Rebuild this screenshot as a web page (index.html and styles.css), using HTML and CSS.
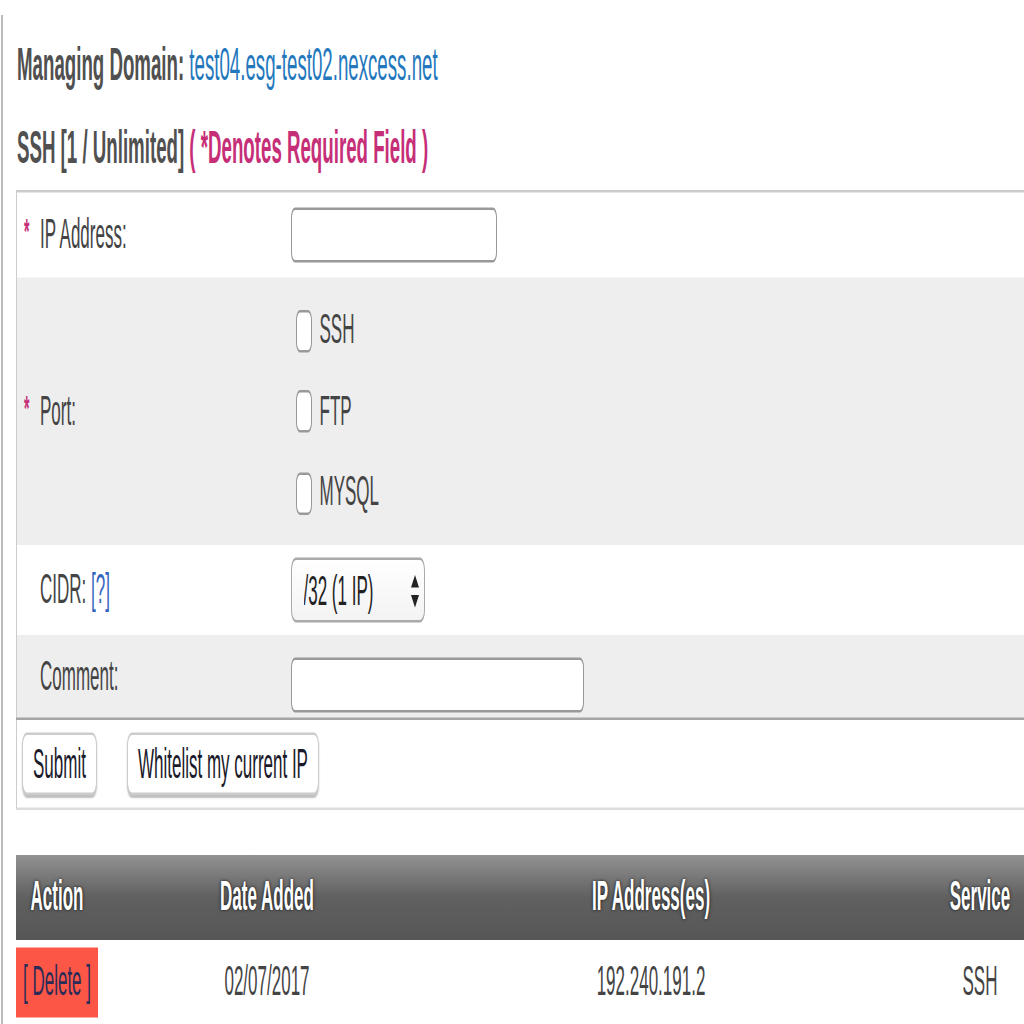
FILE: index.html
```html
<!DOCTYPE html>
<html lang="en">
<head>
    <meta charset="UTF-8">
    <title>IP Whitelist - SSH</title>
    <link rel="stylesheet" href="styles.css">
</head>
<body>
    <div class="frame">
        <div class="page">
            <div class="content">
                <h3 class="domain">Managing Domain: <a href="#">test04.esg-test02.nexcess.net</a></h3>
                <h3 class="service-title">SSH [1 / Unlimited] <span class="required-note">( *Denotes Required Field )</span></h3>

                <form class="whitelist-form">
                    <table class="form-table">
                        <colgroup>
                            <col class="col-label">
                            <col>
                        </colgroup>
                        <tr class="row-ip">
                            <td class="label"><span class="req">*</span>IP Address:</td>
                            <td><input type="text" class="text-input ip-input"></td>
                        </tr>
                        <tr class="row-port">
                            <td class="label"><span class="req">*</span>Port:</td>
                            <td class="ports">
                                <label><input type="checkbox" class="check"> SSH</label>
                                <label><input type="checkbox" class="check"> FTP</label>
                                <label><input type="checkbox" class="check"> MYSQL</label>
                            </td>
                        </tr>
                        <tr class="row-cidr">
                            <td class="label no-req">CIDR: <a href="#" class="help">[?]</a></td>
                            <td>
                                <span class="select-wrap">
                                    <select class="cidr-select">
                                        <option>/32 (1 IP)</option>
                                        <option>/31 (2 IPs)</option>
                                        <option>/30 (4 IPs)</option>
                                        <option>/29 (8 IPs)</option>
                                    </select>
                                    <svg class="select-arrows" width="8" height="13" viewBox="0 0 8 13">
                                        <path d="M4 0 L8 5 L0 5 Z" fill="#222"/>
                                        <path d="M4 13 L8 8 L0 8 Z" fill="#222"/>
                                    </svg>
                                </span>
                            </td>
                        </tr>
                        <tr class="row-comment">
                            <td class="label no-req">Comment:</td>
                            <td><input type="text" class="text-input comment-input"></td>
                        </tr>
                    </table>
                    <div class="form-actions">
                        <button type="button" class="btn">Submit</button>
                        <button type="button" class="btn">Whitelist my current IP</button>
                    </div>
                </form>

                <table class="list-table">
                    <colgroup>
                        <col class="col-action">
                        <col class="col-date">
                        <col class="col-ip">
                        <col class="col-service">
                    </colgroup>
                    <thead>
                        <tr>
                            <th>Action</th>
                            <th>Date Added</th>
                            <th>IP Address(es)</th>
                            <th>Service</th>
                        </tr>
                    </thead>
                    <tbody>
                        <tr>
                            <td class="action"><a href="#" class="delete">[ Delete ]</a></td>
                            <td>02/07/2017</td>
                            <td>192.240.191.2</td>
                            <td>SSH</td>
                        </tr>
                    </tbody>
                </table>
            </div>
        </div>
    </div>
</body>
</html>
```

FILE: styles.css
```css
body {
    margin: 0;
    overflow: hidden;
    background: #fff;
    font-family: "Liberation Sans", Arial, sans-serif;
}
.frame {
    width: 1024px;
    height: 1024px;
    overflow: hidden;
}

/* the panel is drawn tall: everything is stretched on the vertical axis */
.page {
    width: 1024px;
    padding-top: 6px;
    transform: scaleY(2.5);
    transform-origin: 0 0;
}
.content {
    margin-left: 1px;
    border-left: 2px solid #bbb;
    padding: 9px 0 0 13px;
    height: 420px;
    overflow: hidden;
}

h3 {
    margin: 0;
    padding-left: 1px;
    font-size: 18.7px;
    line-height: 22px;
    font-weight: bold;
    color: #505050;
}
h3 a {
    color: #2378bd;
    font-weight: normal;
    text-decoration: none;
}
.domain {
    margin-bottom: 11px;
}
.service-title {
    margin-bottom: 6px;
}
.required-note {
    color: #c62f78;
}

/* form */
.form-table {
    width: 1100px;
    table-layout: fixed;
    border-collapse: collapse;
    border-top: 1px solid #ccc;
    border-left: 1px solid #ccc;
    border-bottom: 1px solid #a5a5a5;
    font-size: 17px;
    color: #444;
}
.col-label { width: 274px; }
.form-table td {
    padding: 0;
    vertical-align: middle;
}
.form-table td.label {
    padding-left: 7px;
}
.form-table td.no-req {
    padding-left: 23px;
}
.req {
    display: inline-block;
    width: 16px;
    color: #c62f78;
    font-weight: bold;
    font-size: 14px;
    vertical-align: top;
}
.row-ip td { height: 34px; }
.row-port td { height: 107px; background: #eee; }
.row-cidr td { height: 36px; }
.row-comment td { height: 33px; background: #eee; }

.help {
    color: #3565c0;
    text-decoration: none;
}

.text-input {
    box-sizing: border-box;
    height: 22px;
    border: 1px solid #999;
    border-radius: 4px;
    background: #fff;
    padding: 0 4px;
    vertical-align: middle;
}
.ip-input { width: 206px; }
.comment-input {
    width: 293px;
    margin-top: 7px;
}

.ports {
    padding: 4px 0 5px 0;
}
.ports label {
    display: flex;
    align-items: center;
    height: 32.5px;
}
.check {
    -webkit-appearance: none;
    appearance: none;
    box-sizing: border-box;
    width: 16px;
    height: 17px;
    margin: 0 8px 0 5px;
    border: 1px solid #999;
    border-radius: 4px;
    background: #fff;
}

.select-wrap {
    position: relative;
    display: inline-block;
    vertical-align: middle;
}
.cidr-select {
    -webkit-appearance: none;
    appearance: none;
    box-sizing: border-box;
    width: 134px;
    height: 26px;
    padding: 0 0 0 12px;
    border: 1px solid #aaa;
    border-radius: 5px;
    background: linear-gradient(#fff, #f3f3f3);
    font-family: "Liberation Sans", Arial, sans-serif;
    font-size: 17px;
    color: #222;
}
.select-arrows {
    position: absolute;
    left: 120px;
    top: 7px;
    pointer-events: none;
}

.form-actions {
    width: 1100px;
    display: flex;
    gap: 30px;
    padding: 5px 0 5px 5px;
    border-left: 1px solid #ccc;
    border-bottom: 1px solid #ddd;
}
.btn {
    height: 25px;
    padding: 0 10px;
    border: 1px solid #ccc;
    border-radius: 5px;
    background: #fff;
    box-shadow: 0 1px 1px rgba(0, 0, 0, 0.25);
    font-family: "Liberation Sans", Arial, sans-serif;
    font-size: 17px;
    color: #1a1a2a;
}

/* list of whitelisted addresses */
.list-table {
    margin-top: 18px;
    width: 1078px;
    table-layout: fixed;
    border-collapse: collapse;
    font-size: 17px;
    color: #444;
}
.col-action { width: 82px; }
.col-date { width: 338px; }
.col-ip { width: 430px; }
.col-service { width: 228px; }

.list-table th {
    height: 34px;
    padding: 0;
    background: linear-gradient(#929292, #606060 50%, #565656);
    color: #fff;
    font-weight: bold;
    text-align: center;
    text-shadow: 0 0 2px rgba(0, 0, 0, 0.9);
}
.list-table td {
    height: 28px;
    padding: 3px 0;
    text-align: center;
}
.delete {
    display: block;
    height: 28px;
    line-height: 28px;
    background: #fc5646;
    color: #2b2b5a;
    text-decoration: none;
}
```
